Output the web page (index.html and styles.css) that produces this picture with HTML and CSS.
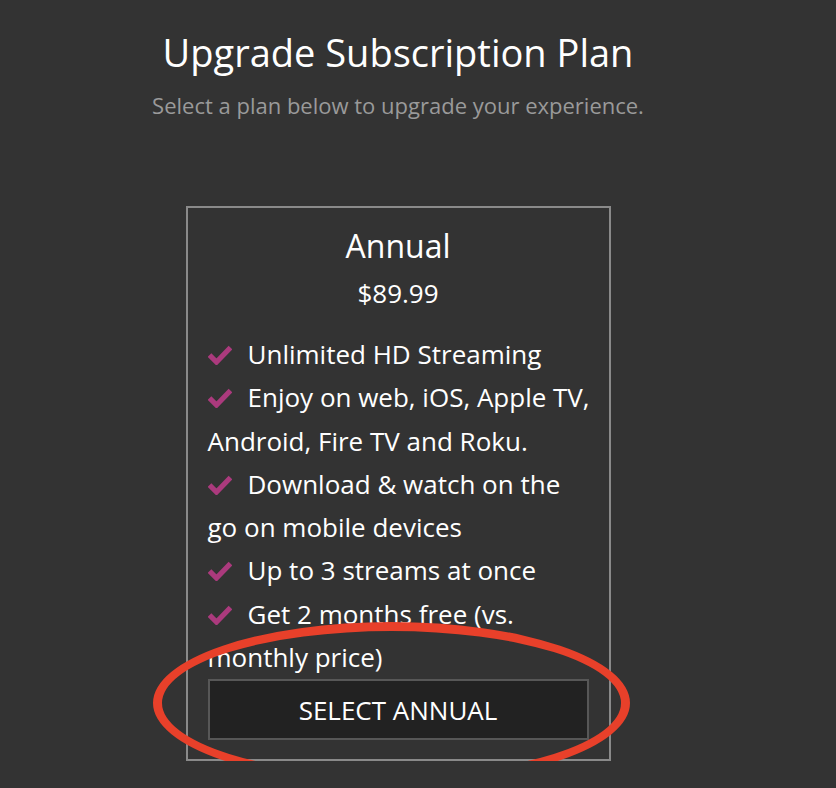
FILE: index.html
```html
<!DOCTYPE html>
<html>
<head>
<meta charset="utf-8">
<link rel="stylesheet" href="styles.css">
</head>
<body>
<div class="page">
  <h1 class="title">Upgrade Subscription Plan</h1>
  <p class="subtitle">Select a plan below to upgrade your experience.</p>
  <div class="card">
    <h2 class="plan-name">Annual</h2>
    <div class="price">$89.99</div>
    <ul class="features">
      <li><svg class="check" viewBox="0 0 24 20"><polyline points="1.5,10 8.5,17 22.5,2.5" fill="none" stroke="#ab3a7d" stroke-width="5.2"/></svg>Unlimited HD Streaming</li>
      <li><svg class="check" viewBox="0 0 24 20"><polyline points="1.5,10 8.5,17 22.5,2.5" fill="none" stroke="#ab3a7d" stroke-width="5.2"/></svg>Enjoy on web, iOS, Apple TV, Android, Fire TV and Roku.</li>
      <li><svg class="check" viewBox="0 0 24 20"><polyline points="1.5,10 8.5,17 22.5,2.5" fill="none" stroke="#ab3a7d" stroke-width="5.2"/></svg>Download &amp; watch on the go on mobile devices</li>
      <li><svg class="check" viewBox="0 0 24 20"><polyline points="1.5,10 8.5,17 22.5,2.5" fill="none" stroke="#ab3a7d" stroke-width="5.2"/></svg>Up to 3 streams at once</li>
      <li><svg class="check" viewBox="0 0 24 20"><polyline points="1.5,10 8.5,17 22.5,2.5" fill="none" stroke="#ab3a7d" stroke-width="5.2"/></svg>Get 2 months free (vs. monthly price)</li>
    </ul>
    <button class="select-btn">SELECT ANNUAL</button>
    <div class="annotation"></div>
  </div>
</div>
</body>
</html>
```

FILE: styles.css
```css
html, body {
  margin: 0;
  padding: 0;
  background: #333333;
}
body {
  font-family: "Open Sans", "Noto Sans", sans-serif;
  color: #ffffff;
}
.page {
  width: 796px;
  display: flex;
  flex-direction: column;
  align-items: center;
  padding-top: 28px;
}
.title {
  margin: 0;
  font-size: 38px;
  font-weight: 400;
  line-height: 48px;
}
.subtitle {
  margin: 16px 0 0;
  font-size: 22px;
  color: #9a9a9a;
  line-height: 26px;
}
.card {
  position: relative;
  margin-top: 88px;
  width: 381px;
  padding: 18px 20px 19px;
  border: 2px solid #8a8a8a;
}
.plan-name {
  margin: 0;
  text-align: center;
  font-size: 32px;
  font-weight: 400;
  line-height: 40px;
}
.price {
  text-align: center;
  font-size: 26px;
  line-height: 30px;
  margin-top: 12px;
}
.features {
  list-style: none;
  margin: 25px -4px 0 0;
  padding: 0;
  font-size: 26px;
  line-height: 43.3px;
}
.check {
  width: 24px;
  height: 20px;
  margin-right: 16px;
  vertical-align: -1px;
}
.select-btn {
  display: block;
  width: 100%;
  height: 61px;
  margin-top: 0;
  background: #222222;
  border: 2px solid #575757;
  color: #ffffff;
  font-family: "Open Sans", "Noto Sans", sans-serif;
  font-size: 26px;
}
.annotation {
  position: absolute;
  left: -35px;
  top: 414px;
  width: 459px;
  height: 144px;
  border: 9px solid #e8402a;
  border-radius: 50%;
}
```
